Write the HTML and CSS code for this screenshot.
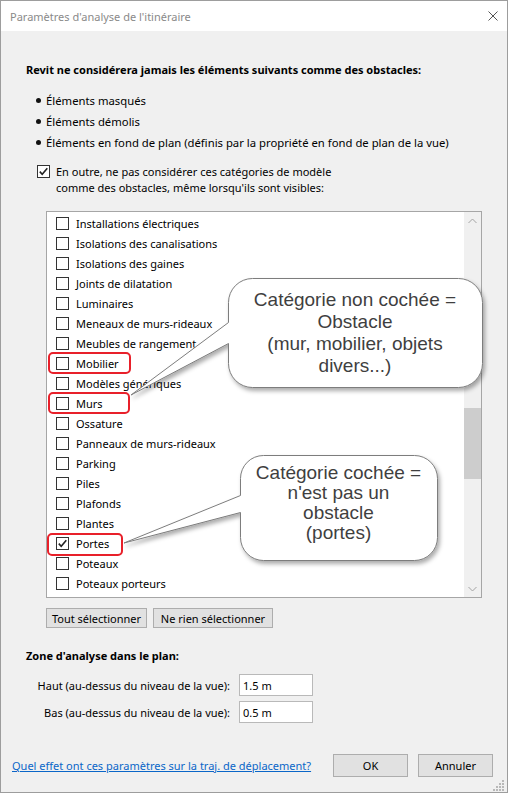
FILE: index.html
```html
<!DOCTYPE html>
<html lang="fr">
<head>
<meta charset="utf-8">
<title>Paramètres d'analyse de l'itinéraire</title>
<link rel="stylesheet" href="styles.css">
</head>
<body>
<div class="page">
  <div class="window">
    <div class="titlebar">
      <span class="title">Paramètres d'analyse de l'itinéraire</span>
      <svg class="close" width="10" height="10" viewBox="0 0 10 10"><path d="M0.5 0.5 L9.5 9.5 M9.5 0.5 L0.5 9.5" stroke="#555" stroke-width="1" fill="none"/></svg>
    </div>
    <div class="content">
      <div class="heading">Revit ne considérera jamais les éléments suivants comme des obstacles:</div>
      <ul class="bullets">
        <li><span class="dot"></span>Éléments masqués</li>
        <li><span class="dot"></span>Éléments démolis</li>
        <li><span class="dot"></span>Éléments en fond de plan (définis par la propriété en fond de plan de la vue)</li>
      </ul>
      <div class="optrow">
        <span class="cb checked"><svg width="11" height="11" viewBox="0 0 11 11"><path d="M1.8 5.6 L4.2 8.2 L9.3 2.3" stroke="#222" stroke-width="1.6" fill="none"/></svg></span>
        <span class="opttext">En outre, ne pas considérer ces catégories de modèle<br>comme des obstacles, même lorsqu'ils sont visibles:</span>
      </div>
      <div class="list">
        <div class="items">
          <div class="item"><span class="cb"></span>Installations électriques</div>
          <div class="item"><span class="cb"></span>Isolations des canalisations</div>
          <div class="item"><span class="cb"></span>Isolations des gaines</div>
          <div class="item"><span class="cb"></span>Joints de dilatation</div>
          <div class="item"><span class="cb"></span>Luminaires</div>
          <div class="item"><span class="cb"></span>Meneaux de murs-rideaux</div>
          <div class="item"><span class="cb"></span>Meubles de rangement</div>
          <div class="item"><span class="cb"></span>Mobilier</div>
          <div class="item"><span class="cb"></span>Modèles génériques</div>
          <div class="item"><span class="cb"></span>Murs</div>
          <div class="item"><span class="cb"></span>Ossature</div>
          <div class="item"><span class="cb"></span>Panneaux de murs-rideaux</div>
          <div class="item"><span class="cb"></span>Parking</div>
          <div class="item"><span class="cb"></span>Piles</div>
          <div class="item"><span class="cb"></span>Plafonds</div>
          <div class="item"><span class="cb"></span>Plantes</div>
          <div class="item"><span class="cb checked"><svg width="11" height="11" viewBox="0 0 11 11"><path d="M1.8 5.6 L4.2 8.2 L9.3 2.3" stroke="#222" stroke-width="1.6" fill="none"/></svg></span>Portes</div>
          <div class="item"><span class="cb"></span>Poteaux</div>
          <div class="item"><span class="cb"></span>Poteaux porteurs</div>
        </div>
        <div class="scrollbar">
          <div class="arrow"><svg width="9" height="6" viewBox="0 0 9 6"><path d="M0.5 5 L4.5 1 L8.5 5" stroke="#a3a3a3" stroke-width="1" fill="none"/></svg></div>
          <div class="track"><div class="thumb"></div></div>
          <div class="arrow"><svg width="9" height="6" viewBox="0 0 9 6"><path d="M0.5 1 L4.5 5 L8.5 1" stroke="#a3a3a3" stroke-width="1" fill="none"/></svg></div>
        </div>
      </div>
      <div class="btnrow">
        <button class="btn b1">Tout sélectionner</button>
        <button class="btn b2">Ne rien sélectionner</button>
      </div>
      <div class="heading zone">Zone d'analyse dans le plan:</div>
      <div class="fields">
        <div class="field"><span class="flabel">Haut (au-dessus du niveau de la vue):</span><span class="input">1.5 m</span></div>
        <div class="field"><span class="flabel">Bas (au-dessus du niveau de la vue):</span><span class="input">0.5 m</span></div>
      </div>
    </div>
    <div class="footer">
      <a class="link" href="#">Quel effet ont ces paramètres sur la traj. de déplacement?</a>
      <button class="btn fbtn">OK</button>
      <button class="btn fbtn">Annuler</button>
    </div>
  </div>

  <div class="mark m1"></div>
  <div class="mark m2"></div>
  <div class="mark m3"></div>

  <svg class="shapes" width="508" height="793" viewBox="0 0 508 793">
    <defs>
      <filter id="sh" x="-10%" y="-10%" width="130%" height="140%">
        <feDropShadow dx="2" dy="3" stdDeviation="2.2" flood-color="#000" flood-opacity="0.33"/>
      </filter>
    </defs>
    <path filter="url(#sh)" fill="#fff" stroke="#7d7d7d" stroke-width="1"
      d="M252.5 278.5 H458.5 A24 24 0 0 1 482.5 302.5 V363.5 A24 24 0 0 1 458.5 387.5 H252.5 A24 24 0 0 1 228.5 363.5 V343.5 L131 395 L228.5 322.5 V302.5 A24 24 0 0 1 252.5 278.5 Z"/>
    <path filter="url(#sh)" fill="#fff" stroke="#7d7d7d" stroke-width="1"
      d="M263.5 455.5 H414.5 A23 23 0 0 1 437.5 478.5 V537.5 A23 23 0 0 1 414.5 560.5 H263.5 A23 23 0 0 1 240.5 537.5 V512.5 L124 543 L240.5 495.5 V478.5 A23 23 0 0 1 263.5 455.5 Z"/>
  </svg>
  <div class="callout c1">Catégorie non cochée =<br>Obstacle<br>(mur, mobilier, objets<br>divers...)</div>
  <div class="callout c2">Catégorie cochée =<br>n'est pas un<br>obstacle<br>(portes)</div>

  <svg class="grip" width="12" height="12" viewBox="0 0 12 12">
    <g fill="#b8b8b8">
      <rect x="9" y="1" width="2" height="2"/>
      <rect x="6" y="4" width="2" height="2"/><rect x="9" y="4" width="2" height="2"/>
      <rect x="3" y="7" width="2" height="2"/><rect x="6" y="7" width="2" height="2"/><rect x="9" y="7" width="2" height="2"/>
      <rect x="0" y="10" width="2" height="2"/><rect x="3" y="10" width="2" height="2"/><rect x="6" y="10" width="2" height="2"/><rect x="9" y="10" width="2" height="2"/>
    </g>
  </svg>
</div>
</body>
</html>
```
FILE: styles.css
```css
* { box-sizing: border-box; }
html, body { margin: 0; padding: 0; background: #fff; }
.page {
  position: relative;
  width: 508px;
  height: 793px;
  font-family: "Noto Sans", "Open Sans", sans-serif;
  font-size: 11px;
  color: #000;
}
.window {
  width: 508px;
  height: 793px;
  border: 1px solid #9d9d9d;
  background: #f0f0f0;
  display: flex;
  flex-direction: column;
}
.titlebar {
  height: 30px;
  flex: none;
  background: #fff;
  display: flex;
  align-items: center;
  justify-content: space-between;
  padding: 0 9px 0 9px;
}
.title { color: #8a8a8a; font-size: 11px; }
.close { display: block; }
.content { padding-left: 25px; }
.heading {
  margin-top: 31px;
  line-height: 16px;
  font-weight: bold;
}
.bullets {
  list-style: none;
  margin: 12px 0 0 0;
  padding: 0 0 0 10px;
  font-size: 11.3px;
}
.bullets li {
  display: flex;
  align-items: center;
  height: 21px;
}
.dot {
  width: 5px;
  height: 5px;
  border-radius: 50%;
  background: #111;
  margin-right: 5px;
}
.optrow {
  margin: 11px 0 0 11px;
  display: flex;
  align-items: flex-start;
}
.optrow .cb { margin-top: 1px; margin-right: 6px; }
.opttext { line-height: 16px; }
.cb {
  flex: none;
  width: 13px;
  height: 13px;
  border: 1px solid #333;
  background: #fff;
  display: flex;
  align-items: center;
  justify-content: center;
}
.cb svg { display: block; }
.list {
  margin: 15px 0 0 20px;
  width: 436px;
  height: 387px;
  border: 1px solid #a6a6a6;
  background: #fff;
  display: flex;
  overflow: hidden;
}
.items {
  flex: 1;
  padding: 1px 0 0 9px;
  overflow: hidden;
}
.item {
  height: 20px;
  display: flex;
  align-items: center;
  gap: 7px;
  white-space: nowrap;
}
.scrollbar {
  width: 17px;
  flex: none;
  background: #f0f0f0;
  display: flex;
  flex-direction: column;
}
.arrow {
  height: 17px;
  display: flex;
  align-items: center;
  justify-content: center;
}
.arrow svg { display: block; }
.track { flex: 1; }
.thumb {
  margin-top: 179px;
  height: 71px;
  background: #cdcdcd;
}
.btnrow {
  margin: 10px 0 0 20px;
  display: flex;
  gap: 6px;
}
.btn {
  font-family: inherit;
  font-size: 11px;
  color: #000;
  background: #e1e1e1;
  border: 1px solid #adadad;
  border-radius: 0;
  padding: 0;
  margin: 0;
  height: 20px;
}
.b1 { width: 101px; }
.b2 { width: 120px; }
.zone { margin-top: 20px; }
.fields {
  margin-top: 10px;
  display: flex;
  flex-direction: column;
  gap: 5px;
}
.field {
  display: flex;
  align-items: center;
  gap: 9px;
}
.flabel {
  width: 204px;
  text-align: right;
  white-space: nowrap;
}
.input {
  width: 74px;
  height: 22px;
  background: #fff;
  border: 1px solid #b9b9b9;
  padding-left: 3px;
  display: flex;
  align-items: center;
}
.footer {
  margin-top: auto;
  display: flex;
  align-items: center;
  gap: 10px;
  padding: 0 14px 15px 11px;
}
.link {
  color: #0a66c8;
  text-decoration: underline;
  margin-right: auto;
}
.fbtn { width: 75px; height: 23px; }
.mark {
  position: absolute;
  border: 2px solid #e8202a;
  border-radius: 5px;
}
.m1 { left: 48px; top: 352px; width: 83px; height: 22px; }
.m2 { left: 48px; top: 392px; width: 82px; height: 22px; }
.m3 { left: 47px; top: 533px; width: 76px; height: 23px; }
.shapes {
  position: absolute;
  left: 0;
  top: 0;
  pointer-events: none;
}
.callout {
  position: absolute;
  display: flex;
  align-items: center;
  justify-content: center;
  text-align: center;
  font-family: "Liberation Sans", Arial, sans-serif;
  font-size: 19px;
  color: #3f3f3f;
}
.c1 { left: 228px; top: 278px; width: 254px; height: 109px; line-height: 22px; }
.c2 { left: 240px; top: 455px; width: 197px; height: 105px; line-height: 20px; padding-bottom: 9px; }
.grip { position: absolute; left: 493px; top: 779px; }
```
